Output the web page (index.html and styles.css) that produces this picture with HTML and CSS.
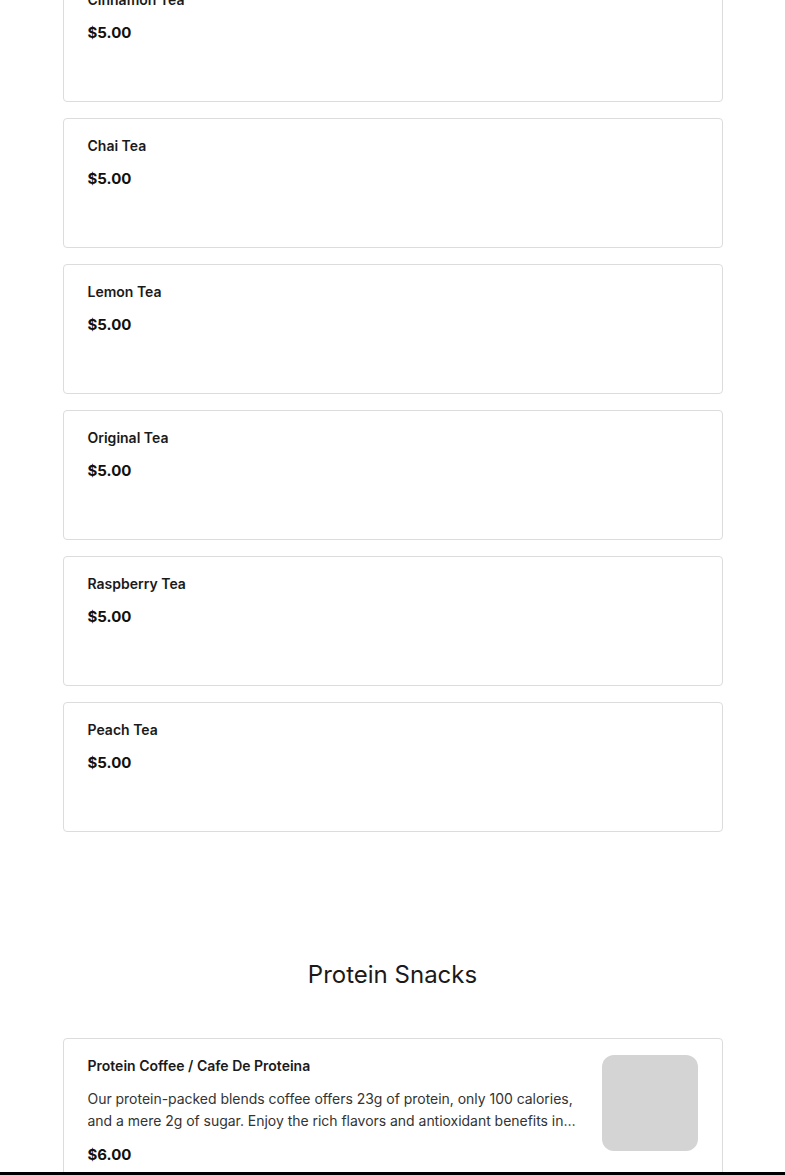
FILE: index.html
```html
<!DOCTYPE html>
<html lang="en">
<head>
<meta charset="utf-8">
<title>Menu</title>
<link rel="stylesheet" href="styles.css">
</head>
<body>
<main class="menu">
  <section class="section section-first">
    <div class="list">
      <div class="card"><div class="info"><div class="name">Cinnamon Tea</div><div class="price">$5.00</div></div></div>
      <div class="card"><div class="info"><div class="name">Chai Tea</div><div class="price">$5.00</div></div></div>
      <div class="card"><div class="info"><div class="name">Lemon Tea</div><div class="price">$5.00</div></div></div>
      <div class="card"><div class="info"><div class="name">Original Tea</div><div class="price">$5.00</div></div></div>
      <div class="card"><div class="info"><div class="name">Raspberry Tea</div><div class="price">$5.00</div></div></div>
      <div class="card"><div class="info"><div class="name">Peach Tea</div><div class="price">$5.00</div></div></div>
    </div>
  </section>
  <section class="section">
    <h2 class="section-title">Protein Snacks</h2>
    <div class="list">
      <div class="card card-rich">
        <div class="info">
          <div class="name">Protein Coffee / Cafe De Proteina</div>
          <p class="desc">Our protein-packed blends coffee offers 23g of protein, only 100 calories, and a mere 2g of sugar. Enjoy the rich flavors and antioxidant benefits in every sip.</p>
          <div class="price">$6.00</div>
        </div>
        <div class="thumb"></div>
      </div>
    </div>
  </section>
</main>
<div class="bottom-bar"></div>
</body>
</html>
```

FILE: styles.css
```css
* { box-sizing: border-box; }
html, body { margin: 0; padding: 0; background: #fff; }
body {
  font-family: Inter, "Noto Sans", "Liberation Sans", sans-serif;
  color: #1a1a1a;
}
.menu {
  width: 660px;
  margin: 0 auto;
}
.section-first { margin-top: -28px; }
.list {
  display: flex;
  flex-direction: column;
  gap: 16px;
}
.card {
  display: flex;
  align-items: flex-start;
  gap: 22px;
  min-height: 130px;
  padding: 16px 24px 17px;
  border: 1px solid #dcdcdc;
  border-radius: 4px;
  background: #fff;
}
.info {
  flex: 1;
  min-width: 0;
  display: flex;
  flex-direction: column;
}
.name {
  font-size: 14px;
  line-height: 22px;
  font-weight: 600;
  color: #1a1a1a;
}
.price {
  margin-top: 11px;
  font-size: 15px;
  line-height: 22px;
  font-weight: 700;
  color: #111;
}
.desc {
  margin: 11px 0 0;
  font-size: 14px;
  line-height: 22px;
  height: 44px;
  letter-spacing: -0.03px;
  color: #333;
  display: -webkit-box;
  -webkit-line-clamp: 2;
  -webkit-box-orient: vertical;
  overflow: hidden;
}
.desc + .price { margin-top: 12px; }
.thumb {
  flex: none;
  width: 96px;
  height: 96px;
  border-radius: 12px;
  background: #d4d4d4;
}
.section-title {
  margin: 127px 0 47px;
  text-align: center;
  font-size: 24px;
  line-height: 32px;
  font-weight: 400;
  color: #1a1a1a;
}
.bottom-bar {
  position: fixed;
  left: 0;
  right: 0;
  bottom: 0;
  height: 3px;
  background: #000;
}
```
